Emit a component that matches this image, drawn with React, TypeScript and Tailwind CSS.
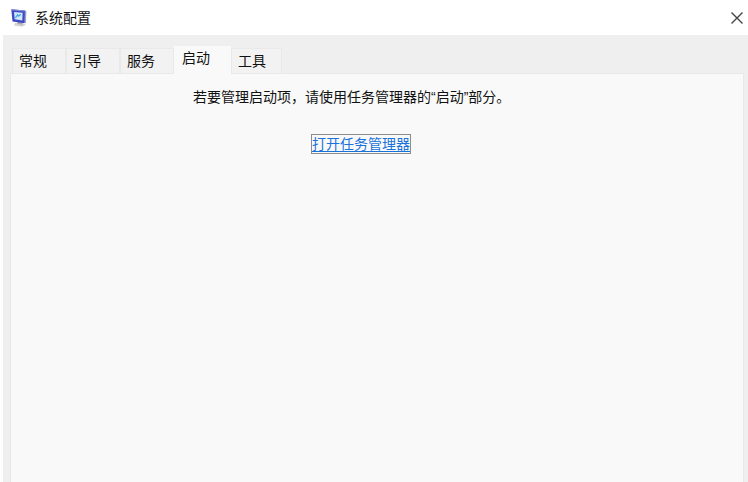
import { useState } from "react";

const tabs = ["常规", "引导", "服务", "启动", "工具"];

function MonitorIcon() {
  return (
    <svg aria-hidden="true" viewBox="0 0 16 18" className="h-[18px] w-4 shrink-0">
      <path d="M4 14 11 14l4 1.8-4 1.9L3 16.4z" fill="#d2d3d2" />
      <path d="m6 12.6 5.4 1v2.2l-4.6-.7z" fill="#a5a8aa" />
      <path d="m13.4 1.2 2 .9-.5 12.2-1.9-.5z" fill="#9aa0c6" />
      <path d="M.3.2 14 1.4l-.6 12.8L1.5 12.4z" fill="#4049c4" />
      <path d="M.3.2 14 1.4v1L.4 1.2z" fill="#8991d6" />
      <path d="m3 3 8.6.8-.3 7.6-7.6-1.1z" fill="#cfe9fb" />
      <path d="m4.4 8.8 2.2-3 1 1.4 2.2-2" fill="none" stroke="#43a6dc" strokeWidth="1.2" />
    </svg>
  );
}

export default function App() {
  const [active, setActive] = useState("启动");

  return (
    <main
      lang="zh-CN"
      className="flex min-h-screen flex-col bg-white font-['Liberation_Sans','Noto_Sans_CJK_SC',sans-serif] text-sm leading-5 text-[#111]"
    >
      <header className="flex h-[35px] items-center justify-between pl-[11px] pr-1">
        <div className="flex items-center gap-2">
          <MonitorIcon />
          <h1>系统配置</h1>
        </div>
        <button type="button" aria-label="关闭" className="flex size-[14px] items-center justify-center">
          <svg aria-hidden="true" viewBox="0 0 14 14" className="size-[14px]" fill="none" stroke="#444" strokeWidth="1.4">
            <path d="m1.5 1.5 11 11m0-11-11 11" />
          </svg>
        </button>
      </header>

      <div className="ml-[3px] flex grow flex-col bg-[#efefef] pl-[7px] pr-1 pt-[11px]">
        <div role="tablist" className="flex items-end pl-0.5">
          {tabs.map((tab) => (
            <button
              key={tab}
              id={`tab-${tab}`}
              type="button"
              role="tab"
              aria-selected={tab === active}
              aria-controls="panel"
              onClick={() => setActive(tab)}
              className={
                tab === active
                  ? "relative -mb-px h-7 w-[57px] bg-[#f9f9f9] pb-1 pl-2 text-left"
                  : "h-[25px] w-[54px] border border-b-0 border-[#e9e9e9] bg-[#f2f2f2] pl-1.5 text-left last:w-[51px]"
              }
            >
              {tab}
            </button>
          ))}
        </div>

        <section
          id="panel"
          role="tabpanel"
          aria-labelledby={`tab-${active}`}
          className="flex grow flex-col items-start border border-b-0 border-[#e9e9e9] bg-[#f9f9f9] px-[182px] pt-[13px]"
        >
          <p className="whitespace-nowrap">若要管理启动项，请使用任务管理器的“启动”部分。</p>
          <div className="flex w-[336px] justify-center pt-[27px]">
            <a href="#task-manager" className="border border-[#8c8c8c] leading-[18px] text-[#1a73d9] underline underline-offset-2">
              打开任务管理器
            </a>
          </div>
        </section>
      </div>
    </main>
  );
}
